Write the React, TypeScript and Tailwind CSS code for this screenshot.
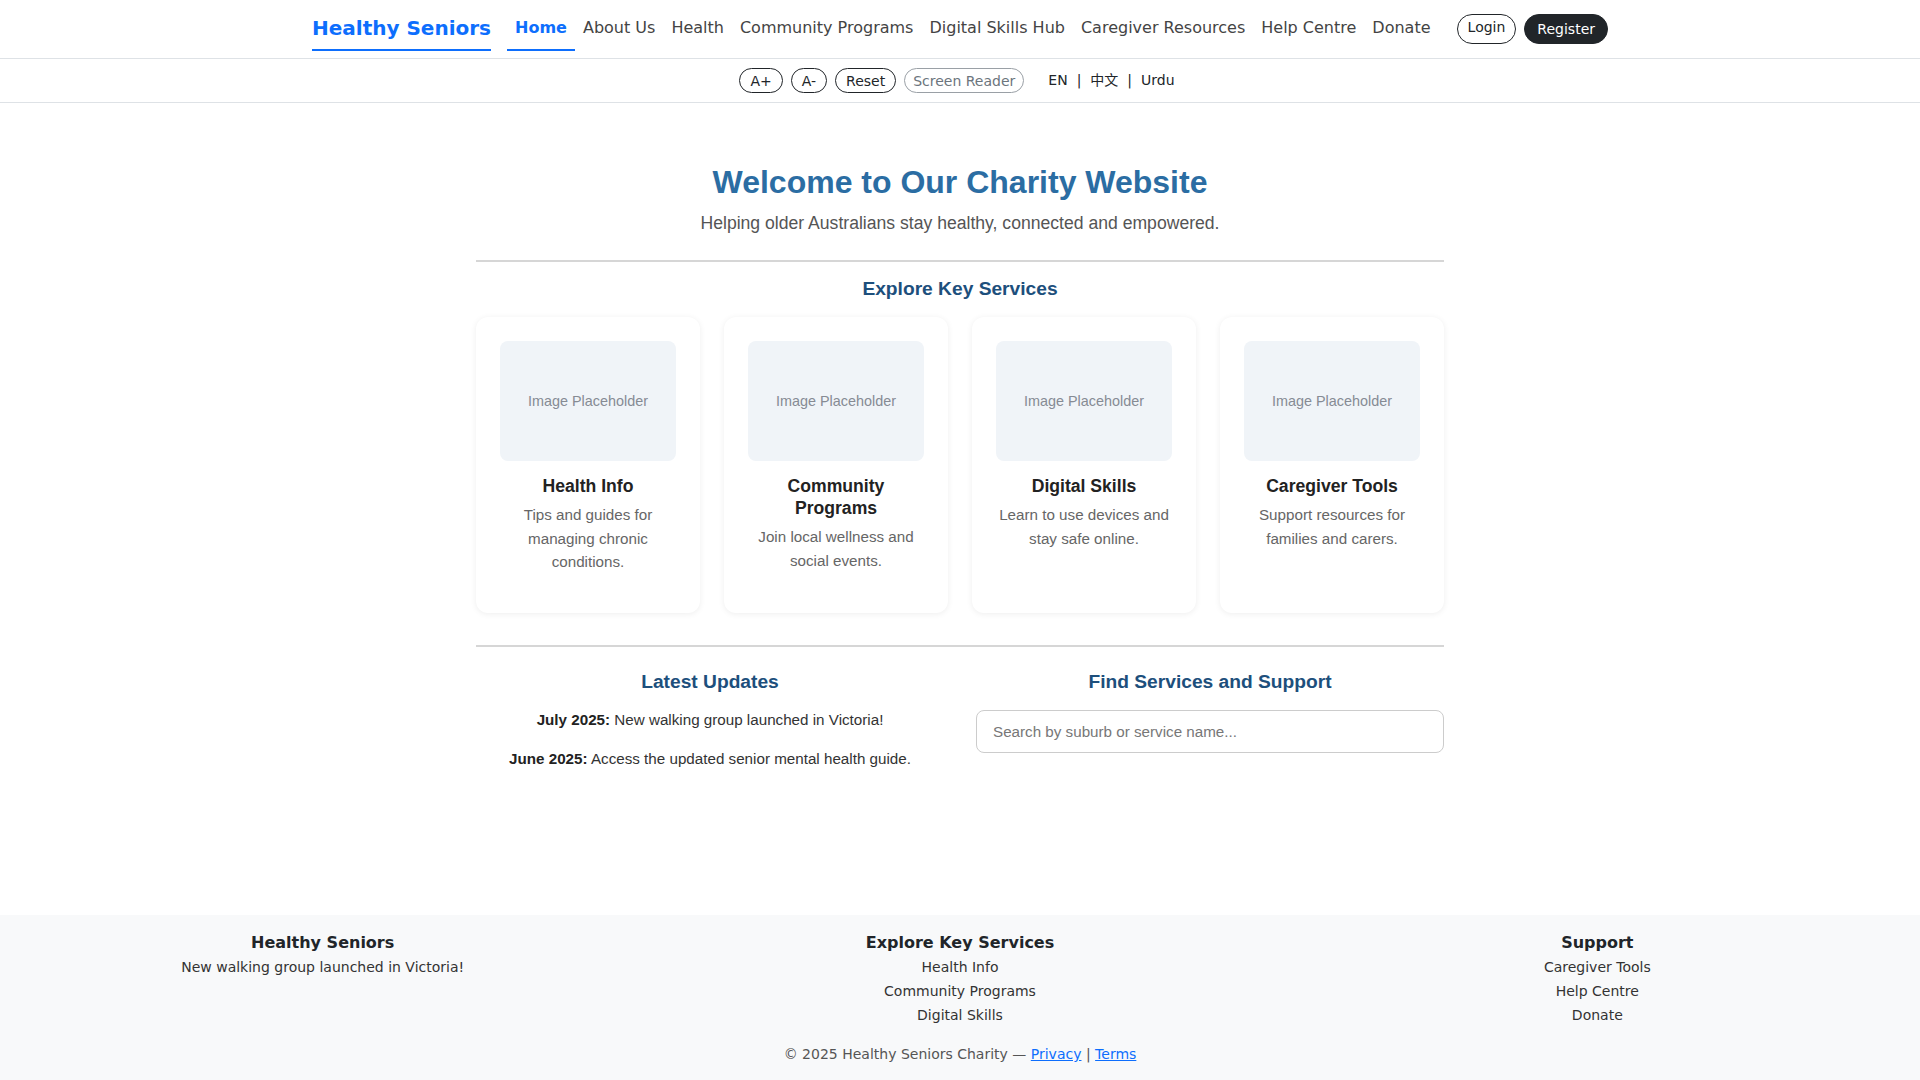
import React from 'react';

const navLinks = ['About Us', 'Health', 'Community Programs', 'Digital Skills Hub', 'Caregiver Resources', 'Help Centre', 'Donate'];

const services = [
  { title: 'Health Info', text: 'Tips and guides for managing chronic conditions.' },
  { title: 'Community Programs', text: 'Join local wellness and social events.' },
  { title: 'Digital Skills', text: 'Learn to use devices and stay safe online.' },
  { title: 'Caregiver Tools', text: 'Support resources for families and carers.' },
];

const updates = [
  { date: 'July 2025:', text: 'New walking group launched in Victoria!' },
  { date: 'June 2025:', text: 'Access the updated senior mental health guide.' },
];

function Header() {
  return (
    <>
      <nav className="h-[59px] border-b border-[#dee2e6] bg-white">
        <div className="mx-auto flex h-full max-w-[1320px] items-start px-3">
          <a className="mr-4 box-border h-[51px] border-b-2 border-[#0d6efd] pt-[13px] text-[20px] font-bold leading-[30px] text-[#0d6efd]">
            Healthy Seniors
          </a>
          <a className="box-border h-[51px] border-b-2 border-[#0d6efd] px-2 pt-[16px] text-[16px] font-bold leading-6 text-[#0d6efd]">
            Home
          </a>
          {navLinks.map(l => (
            <a key={l} className="box-border h-[51px] px-2 pt-[16px] text-[16px] leading-6 text-[#444]">
              {l}
            </a>
          ))}
          <div className="ml-auto mt-[14px] flex items-center gap-2">
            <button className="h-[30px] rounded-full border border-[#212529] px-2.5 pb-[4px] text-[14px] leading-5 text-[#212529]">Login</button>
            <button className="h-[30px] rounded-full border border-[#212529] bg-[#212529] px-3 text-[14px] leading-5 text-white">Register</button>
          </div>
        </div>
      </nav>
      <div className="flex h-[44px] items-center justify-center border-b border-[#dee2e6] pr-[6px] text-[14px] text-[#212529]">
        <div className="flex items-center gap-2">
          <button className="h-[25px] rounded-full border border-[#212529] px-2.5 leading-5">A+</button>
          <button className="h-[25px] rounded-full border border-[#212529] px-2.5 leading-5">A-</button>
          <button className="h-[25px] rounded-full border border-[#212529] px-2.5 leading-5">Reset</button>
          <button className="h-[25px] rounded-full border border-[#9aa0a6] px-2 leading-5 text-[#6c757d]">Screen Reader</button>
        </div>
        <div className="ml-6 flex items-center gap-[9px]">
          <span>EN</span>
          <span>|</span>
          <span className="font-['DejaVu_Sans','Noto_Sans_CJK_SC',sans-serif]">中文</span>
          <span>|</span>
          <span>Urdu</span>
        </div>
      </div>
    </>
  );
}

function Main() {
  return (
    <main className="mx-auto max-w-[968px] pb-[145px] pt-[60px] font-['Liberation_Sans',Arial,sans-serif] text-center">
      <h1 className="mb-[9px] text-[32px] font-bold leading-[1.2] text-[#2b6da3]">Welcome to Our Charity Website</h1>
      <p className="text-[17.6px] leading-[27px] text-[#555]">Helping older Australians stay healthy, connected and empowered.</p>

      <hr className="mt-[23px] border-t-2 border-[#d6d6d6]" />

      <h2 className="mt-[15px] mb-[16px] text-[19.2px] font-bold leading-6 text-[#1d4f7c]">Explore Key Services</h2>
      <div className="grid grid-cols-4 gap-6">
        {services.map(s => (
          <div key={s.title} className="rounded-xl bg-white p-6 shadow-[0_1px_6px_rgba(0,0,0,0.07)]">
            <div className="flex h-[120px] items-center justify-center rounded-lg bg-[#f0f4f8] text-[14.4px] text-[#868b94]">
              Image Placeholder
            </div>
            <h3 className="mt-[14px] text-[17.6px] font-bold leading-[22px] text-[#222]">{s.title}</h3>
            <p className="mb-4 mt-[6px] text-[15.2px] leading-[23.3px] text-[#666]">{s.text}</p>
          </div>
        ))}
      </div>

      <hr className="mt-8 border-t-2 border-[#d6d6d6]" />

      <div className="mt-[23px] grid grid-cols-2 gap-8">
        <div>
          <h2 className="mb-[14px] text-[19.2px] font-bold leading-6 text-[#1d4f7c]">Latest Updates</h2>
          {updates.map((u, i) => (
            <p key={i} className={`text-[15.2px] leading-[23px] text-[#333] ${i === 0 ? 'mb-4' : ''}`}>
              <strong className="text-[#222]">{u.date}</strong> {u.text}
            </p>
          ))}
        </div>
        <div>
          <h2 className="mb-4 text-[19.2px] font-bold leading-6 text-[#1d4f7c]">Find Services and Support</h2>
          <input
            type="text"
            placeholder="Search by suburb or service name..."
            className="box-border h-[43px] w-full rounded-lg border border-[#ccc] px-4 text-[15.2px] text-[#333] outline-none placeholder:text-[#777]"
          />
        </div>
      </div>
    </main>
  );
}

function Footer() {
  return (
    <footer className="bg-[#f8f9fa] pb-4 pt-4 text-center">
      <div className="grid grid-cols-3 px-1">
        <div>
          <h5 className="mb-[2px] text-[16px] font-bold leading-6 text-[#212529]">Healthy Seniors</h5>
          <p className="text-[14px] leading-[21px] text-[#333]">New walking group launched in Victoria!</p>
        </div>
        <div>
          <h5 className="mb-[2px] text-[16px] font-bold leading-6 text-[#212529]">Explore Key Services</h5>
          <ul className="flex flex-col gap-[3px] text-[14px] leading-[21px] text-[#333]">
            <li>Health Info</li>
            <li>Community Programs</li>
            <li>Digital Skills</li>
          </ul>
        </div>
        <div>
          <h5 className="mb-[2px] text-[16px] font-bold leading-6 text-[#212529]">Support</h5>
          <ul className="flex flex-col gap-[3px] text-[14px] leading-[21px] text-[#333]">
            <li>Caregiver Tools</li>
            <li>Help Centre</li>
            <li>Donate</li>
          </ul>
        </div>
      </div>
      <p className="mt-[18px] text-[14px] leading-[21px] text-[#555]">
        © 2025 Healthy Seniors Charity — <a className="text-[#0d6efd] underline">Privacy</a> | <a className="text-[#0d6efd] underline">Terms</a>
      </p>
    </footer>
  );
}

export default function App() {
  return (
    <div className="min-h-screen bg-white font-['DejaVu_Sans',sans-serif] text-[#212529]">
      <Header />
      <Main />
      <Footer />
    </div>
  );
}
